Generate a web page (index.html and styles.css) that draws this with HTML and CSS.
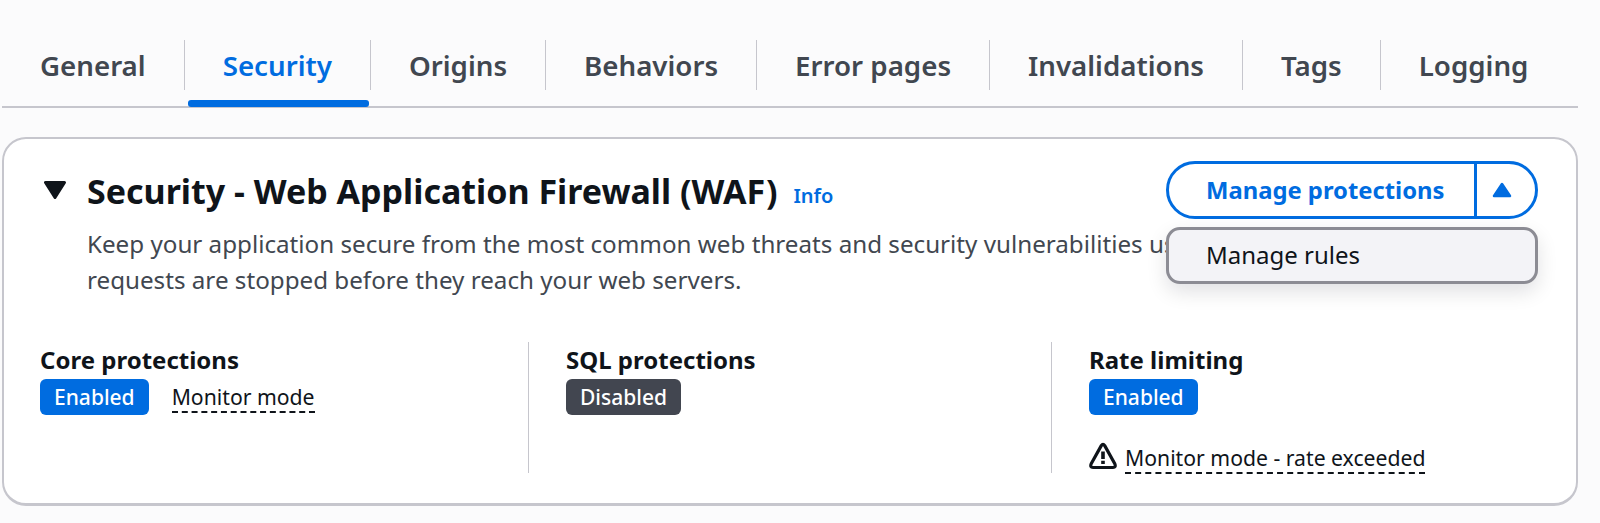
FILE: index.html
```html
<!DOCTYPE html>
<html lang="en">
<head>
  <meta charset="UTF-8" />
  <meta name="viewport" content="width=device-width, initial-scale=1" />
  <title>Distribution - Security</title>
  <link rel="stylesheet" href="styles.css">
</head>
<body>
  <div class="page">
    <div class="tabs">
      <div class="tab">General</div>
      <div class="tab tab-active">Security</div>
      <div class="tab">Origins</div>
      <div class="tab">Behaviors</div>
      <div class="tab">Error pages</div>
      <div class="tab">Invalidations</div>
      <div class="tab">Tags</div>
      <div class="tab">Logging</div>
    </div>

    <div class="card">
      <div class="card-head">
        <svg class="caret" viewBox="0 0 22 18"><path d="M1.5 1.5h19L11 16.5z" fill="#0f141a" stroke="#0f141a" stroke-width="3" stroke-linejoin="round"/></svg>
        <h2>Security - Web Application Firewall (WAF)</h2>
        <a class="info">Info</a>
      </div>
      <p class="desc">Keep your application secure from the most common web threats and security vulnerabilities using AWS WAF. Unwanted<br>requests are stopped before they reach your web servers.</p>

      <div class="split-wrap">
        <div class="split">
          <div class="split-main">Manage protections</div>
          <div class="split-arrow"><svg viewBox="0 0 20 16" width="20" height="16"><path d="M10 2 18 14H2z" fill="#006ce0" stroke="#006ce0" stroke-width="2.5" stroke-linejoin="round"/></svg></div>
        </div>
        <div class="menu">Manage rules</div>
      </div>

      <div class="cols">
        <div class="col">
          <div class="col-title">Core protections</div>
          <div class="status">
            <span class="badge badge-on">Enabled</span>
            <span class="dashed">Monitor mode</span>
          </div>
        </div>
        <div class="col">
          <div class="col-title">SQL protections</div>
          <div class="status">
            <span class="badge badge-off">Disabled</span>
          </div>
        </div>
        <div class="col">
          <div class="col-title">Rate limiting</div>
          <div class="status">
            <span class="badge badge-on">Enabled</span>
          </div>
          <div class="warn">
            <svg class="warn-icon" viewBox="0 0 28 28" width="28" height="28"><path d="M12.3 3.6Q14 1 15.7 3.6L25.8 21.8Q27.2 25.5 24 25.5H4Q.8 25.5 2.2 21.8z" fill="none" stroke="#0f141a" stroke-width="3.2" stroke-linejoin="round"/><path d="M14 9.5v7.5M14 18.8v3.2" stroke="#0f141a" stroke-width="3.6" fill="none"/></svg>
            <span class="dashed">Monitor mode - rate exceeded</span>
          </div>
        </div>
      </div>
    </div>
  </div>
</body>
</html>
```

FILE: styles.css
```css
* { box-sizing: border-box; }
body { margin: 0; background: #fbfbfc; color: #0f141a; font-family: "Noto Sans", Arial, sans-serif; }
.page { width: 1576px; margin-left: 2px; padding-top: 40px; }

.tabs {
  display: flex;
  height: 68px;
  padding-left: 38px;
  border-bottom: 2px solid #c6c6cd;
}
.tab {
  height: 50px;
  padding: 5px 38px 0;
  border-left: 1px solid #c6c6cd;
  font-size: 27.7px;
  font-weight: 600;
  line-height: 40px;
  color: #414750;
  position: relative;
}
.tab:first-child { padding-left: 0; border-left: 0; }
.tab-active { color: #006ce0; }
.tab-active::after {
  content: "";
  position: absolute;
  left: 3px;
  right: 1px;
  top: 60px;
  height: 7px;
  background: #006ce0;
  border-radius: 3px;
}

.card {
  position: relative;
  height: 369px;
  margin-top: 29px;
  padding: 32px 38px 0;
  background: #fff;
  border: 2px solid #c6c6cd;
  border-bottom-width: 3px;
  border-radius: 24px;
}
.card-head { display: flex; align-items: center; }
.caret { width: 22px; height: 18px; margin: -2px 21px 0 2px; }
.card-head h2 { margin: 0; font-size: 34px; font-weight: 700; line-height: 40px; }
.info { margin: 8px 0 0 16px; font-size: 20px; font-weight: 600; color: #006ce0; }
.desc {
  margin: 15px 0 0 45px;
  font-size: 24.2px;
  line-height: 36px;
  color: #414750;
  white-space: nowrap;
}

.split-wrap { position: absolute; top: 22px; right: 38px; width: 372px; }
.split {
  display: flex;
  height: 58px;
  background: #fff;
  border: 3px solid #006ce0;
  border-radius: 29px;
  color: #006ce0;
}
.split-main {
  width: 308px;
  border-right: 3px solid #006ce0;
  padding-left: 37px;
  font-size: 23.8px;
  font-weight: 700;
  line-height: 52px;
}
.split-arrow { flex: 1; display: flex; align-items: center; justify-content: center; padding-right: 8px; }
.menu {
  height: 57px;
  margin-top: 8px;
  padding-left: 37px;
  background: #f3f3f7;
  border: 3px solid #8c8c94;
  border-radius: 14px;
  box-shadow: 0 8px 20px rgba(0, 7, 22, 0.12);
  font-size: 24px;
  line-height: 50px;
}

.cols {
  display: flex;
  margin: 44px 0 0 -2px;
  height: 131px;
}
.col { flex: none; width: 523px; padding-left: 37px; border-left: 1px solid #c6c6cd; }
.col:first-child { padding-left: 0; border-left: 0; width: 488px; }
.col:last-child { flex: 1; width: auto; }
.col-title { font-size: 24px; font-weight: 700; line-height: 36px; }
.status { display: flex; align-items: center; gap: 23px; margin-top: 1px; }
.badge {
  height: 36px;
  padding: 0 14px;
  border-radius: 6px;
  color: #fff;
  font-size: 21px;
  font-weight: 500;
  line-height: 36px;
}
.badge-on { background: #006ce0; }
.badge-off { background: #424650; }
.dashed { border-bottom: 2px dashed #0f141a; font-size: 21.2px; line-height: 29px; }
.warn { display: flex; align-items: center; gap: 8px; margin-top: 28px; }
.warn-icon { margin-top: -6px; }
```
